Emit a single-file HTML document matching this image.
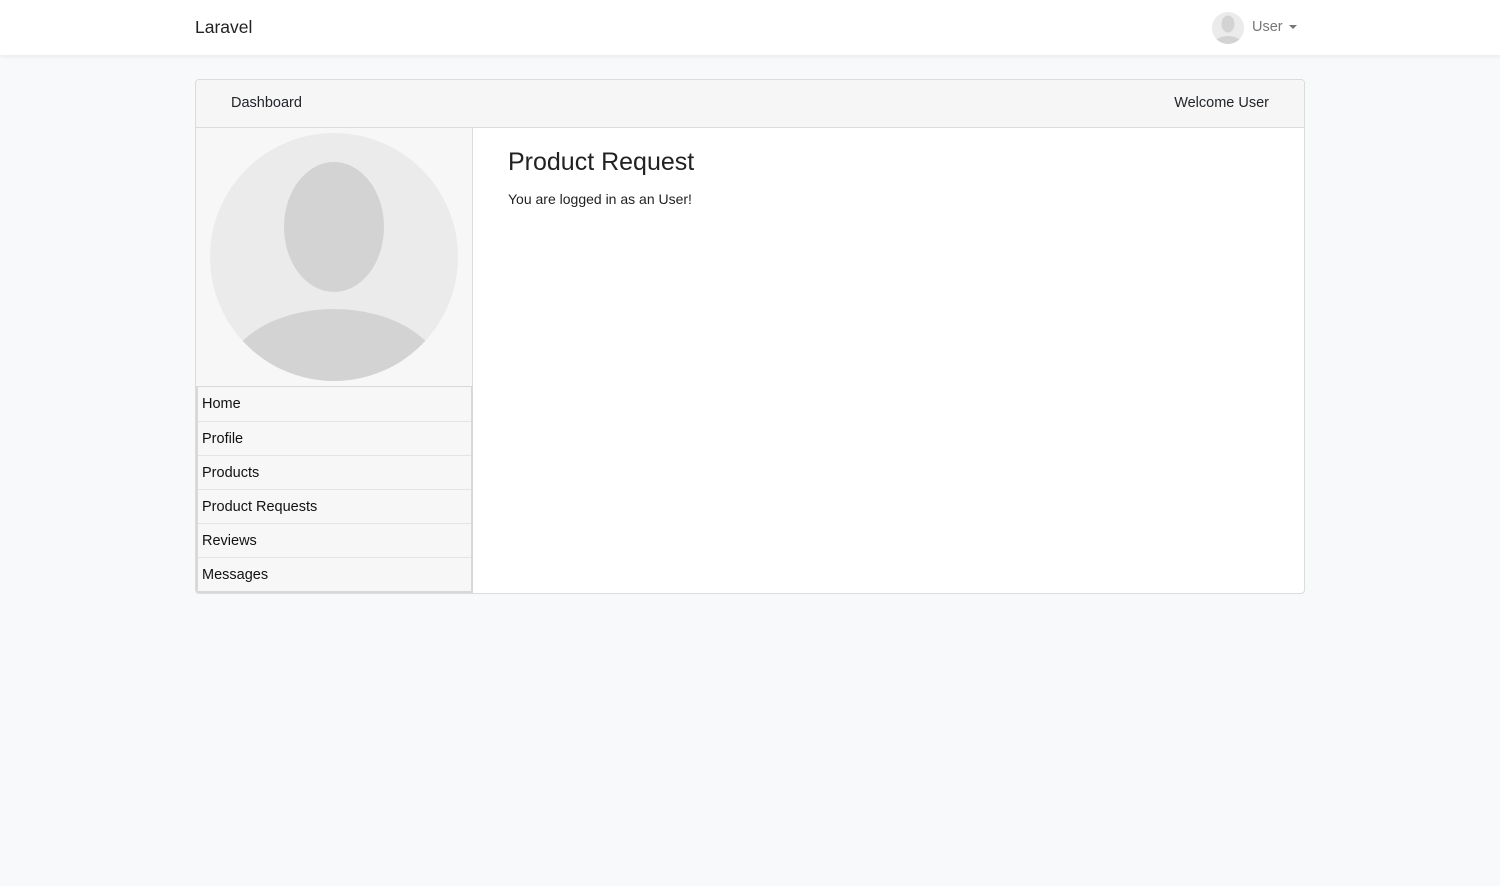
<!DOCTYPE html>
<html><head><style>
*{margin:0;padding:0;box-sizing:border-box}
body{width:1500px;height:886px;background:#f8f9fb;font-family:"Liberation Sans",sans-serif;color:#212529;position:relative;overflow:hidden}
.nav{position:absolute;left:0;top:0;width:1500px;height:55px;background:#fff;box-shadow:0 2px 4px rgba(0,0,0,.06)}
.brand{position:absolute;left:195px;top:17px;font-size:17.5px;color:#222}
.user{position:absolute;left:1252px;top:19px;font-size:14.5px;color:#777}
.caret{position:absolute;left:1289px;top:25px;border-left:4px solid transparent;border-right:4px solid transparent;border-top:4px solid #777}
.card{position:absolute;left:195px;top:79px;width:1110px;height:515px;background:#fff;border:1px solid #dcdcdc;border-radius:4px;overflow:hidden}
.hdr{position:absolute;left:0;top:0;width:100%;height:48px;background:#f6f6f6;border-bottom:1px solid #dcdcdc;font-size:14.5px}
.side{position:absolute;left:0;top:48px;width:277px;height:466px;background:#f7f7f7;border-right:1px solid #dcdcdc}
.menu{position:absolute;left:0;top:258px;width:277px;border:2px solid #d8d8d8;border-top:1px solid #d8d8d8}
.menu div{height:34px;border-top:1px solid #e4e4e4;padding-left:4px;line-height:35px;font-size:14.5px;color:#111}
.menu div:first-child{border-top:none}
</style></head><body>
<div class="nav">
<div class="brand">Laravel</div>
<svg style="position:absolute;left:1212px;top:12px" width="32" height="32" viewBox="0 0 32 32"><defs><clipPath id="c1"><circle cx="16" cy="16" r="16"/></clipPath></defs><circle cx="16" cy="16" r="16" fill="#ebebeb"/><g clip-path="url(#c1)" fill="#d3d3d3"><ellipse cx="16" cy="12" rx="6.5" ry="8.5"/><ellipse cx="16" cy="32" rx="14" ry="8"/></g></svg>
<div class="user">User</div><div class="caret"></div>
</div>
<div class="card">
<div class="hdr"><span style="position:absolute;left:35px;top:15px">Dashboard</span><span style="position:absolute;right:35px;top:15px">Welcome User</span></div>
<div class="side">
<svg style="position:absolute;left:14px;top:5px" width="248" height="248" viewBox="0 0 248 248"><defs><clipPath id="c2"><circle cx="124" cy="124" r="124"/></clipPath></defs><circle cx="124" cy="124" r="124" fill="#ebebeb"/><g clip-path="url(#c2)" fill="#d3d3d3"><ellipse cx="124" cy="94" rx="50" ry="65"/><ellipse cx="124" cy="248" rx="110" ry="72"/></g></svg>
<div class="menu"><div>Home</div><div>Profile</div><div>Products</div><div>Product Requests</div><div>Reviews</div><div>Messages</div></div>
</div>
<div style="position:absolute;left:312px;top:68px;font-size:25px;color:#222">Product Request</div>
<div style="position:absolute;left:312px;top:111px;font-size:14px;color:#222">You are logged in as an User!</div>
</div>
</body></html>
